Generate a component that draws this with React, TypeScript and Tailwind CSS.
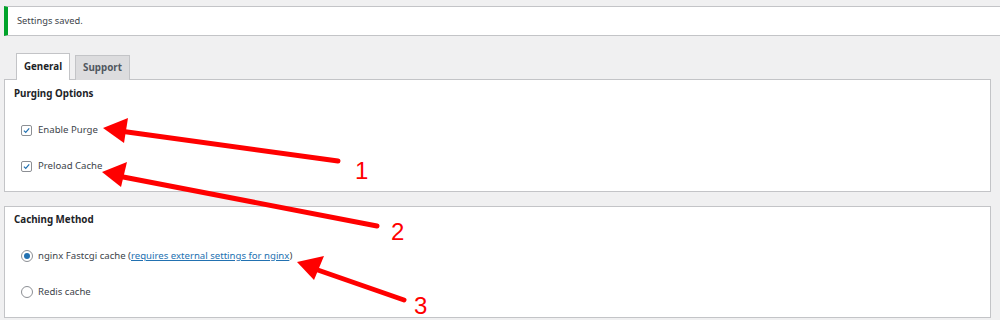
import React from "react";

const font = { fontFamily: "'Noto Sans', 'Open Sans', sans-serif" };

const Checkbox = () => (
  <span className="w-[11px] h-[11px] border border-[#8c8f94] rounded-[2px] bg-white flex items-center justify-center">
    <svg viewBox="0 0 12 12" className="w-[9px] h-[9px]">
      <path d="M2.5 6.2 L5 8.6 L9.6 3.2" fill="none" stroke="#2271b1" strokeWidth="1.6" />
    </svg>
  </span>
);

const Radio = ({ checked }: { checked?: boolean }) => (
  <span className="w-[12px] h-[12px] border border-[#8c8f94] rounded-full bg-white flex items-center justify-center">
    {checked && <span className="w-[6px] h-[6px] rounded-full bg-[#2271b1]" />}
  </span>
);

const Arrows = () => (
  <svg className="absolute inset-0 pointer-events-none" width="1000" height="320" viewBox="0 0 1000 320">
    <g stroke="#ff0000" strokeWidth="5" strokeLinecap="round" fill="none">
      <line x1="338" y1="161" x2="120" y2="131" />
      <line x1="377" y1="226" x2="118" y2="176" />
      <line x1="404" y1="300" x2="312" y2="268" />
    </g>
    <g fill="#ff0000">
      <polygon points="103,128 128,118 124,143" />
      <polygon points="102,172 127,162 121,187" />
      <polygon points="297,262 324,256 314,280" />
    </g>
    <g fill="#ff0000" fontFamily="'Liberation Sans', Arial, sans-serif" fontSize="24">
      <text x="355" y="179">1</text>
      <text x="391" y="240">2</text>
      <text x="414" y="314">3</text>
    </g>
  </svg>
);

export default function App() {
  return (
    <div className="relative w-[1000px] h-[320px] bg-[#f0f0f1] overflow-hidden text-[#3c434a]" style={font}>
      {/* Notice */}
      <div className="ml-[4px] mt-[6px] h-[30px] bg-white border-y border-[#c3c4c7] border-l-[4px] border-l-[#00a32a] flex items-center pl-[9px] text-[9.3px]">
        Settings saved.
      </div>

      {/* Tabs */}
      <div className="mt-[17px] ml-[16px] flex items-end gap-[5px] h-[27px] relative z-10">
        <div className="h-[27px] w-[54px] bg-white border border-b-0 border-[#c3c4c7] flex items-center justify-center text-[9.8px] font-bold text-[#1d2327]">
          General
        </div>
        <div className="h-[25px] w-[55px] bg-[#dcdcde] border border-b-0 border-[#c3c4c7] flex items-center justify-center text-[9.8px] font-bold text-[#50575e]">
          Support
        </div>
      </div>

      {/* Panel 1 */}
      <div className="ml-[4px] w-[987px] h-[113px] bg-white border border-[#c3c4c7] -mt-[1px] pl-[9px] pt-[7px]">
        <div className="text-[9.8px] font-bold text-[#1d2327] leading-[14px]">Purging Options</div>
        <div className="mt-[22px] flex items-center gap-[6px] pl-[7px] text-[9.6px] leading-[14px]">
          <Checkbox />
          <span>Enable Purge</span>
        </div>
        <div className="mt-[22px] flex items-center gap-[6px] pl-[7px] text-[9.6px] leading-[14px]">
          <Checkbox />
          <span>Preload Cache</span>
        </div>
      </div>

      {/* Panel 2 */}
      <div className="ml-[4px] mt-[14px] w-[987px] h-[112px] bg-white border border-[#c3c4c7] pl-[9px] pt-[6px]">
        <div className="text-[9.8px] font-bold text-[#1d2327] leading-[14px]">Caching Method</div>
        <div className="mt-[22px] flex items-center gap-[5px] pl-[7px] text-[9.6px] leading-[14px]">
          <Radio checked />
          <span>
            nginx Fastcgi cache (
            <a className="text-[#2271b1] underline" href="#">requires external settings for nginx</a>)
          </span>
        </div>
        <div className="mt-[22px] flex items-center gap-[5px] pl-[7px] text-[9.6px] leading-[14px]">
          <Radio />
          <span>Redis cache</span>
        </div>
      </div>

      <Arrows />
    </div>
  );
}
